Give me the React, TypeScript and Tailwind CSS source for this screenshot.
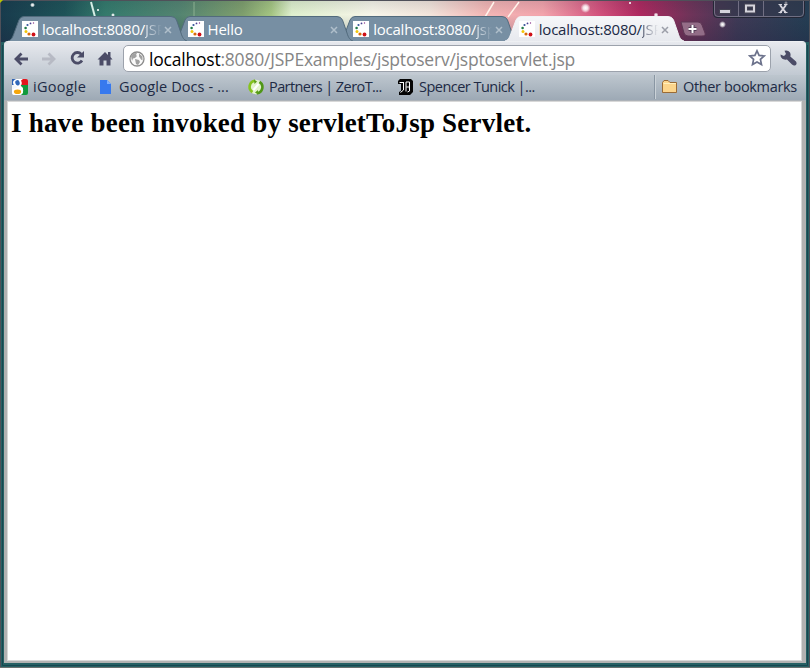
import type { ReactNode } from "react";

const ui = "font-['Open_Sans','Noto_Sans',sans-serif]";

function Backdrop() {
  return (
    <svg className="absolute inset-0" width="810" height="668">
      <defs>
        <linearGradient id="sky" x1="0" x2="810" y1="0" y2="0" gradientUnits="userSpaceOnUse">
          <stop offset="0" stopColor="#183b4d" />
          <stop offset=".08" stopColor="#1e5358" />
          <stop offset=".13" stopColor="#347a6c" />
          <stop offset=".22" stopColor="#538471" />
          <stop offset=".3" stopColor="#7f9f6d" />
          <stop offset=".335" stopColor="#a5c582" />
          <stop offset=".36" stopColor="#dff0ce" />
          <stop offset=".46" stopColor="#f7f5e9" />
          <stop offset=".53" stopColor="#f3e5dc" />
          <stop offset=".6" stopColor="#f3b6b5" />
          <stop offset=".67" stopColor="#f3a4ac" />
          <stop offset=".74" stopColor="#d3517d" />
          <stop offset=".79" stopColor="#ae285f" />
          <stop offset=".85" stopColor="#713359" />
          <stop offset=".91" stopColor="#403a57" />
          <stop offset="1" stopColor="#243e54" />
        </linearGradient>
        <linearGradient id="dusk" x1="0" x2="0" y1="0" y2="42" gradientUnits="userSpaceOnUse">
          <stop offset="0" stopColor="#182838" stopOpacity=".12" />
          <stop offset=".35" stopColor="#182838" stopOpacity="0" />
          <stop offset="1" stopColor="#20203f" stopOpacity=".3" />
        </linearGradient>
        <radialGradient id="star">
          <stop offset="0" stopColor="#fff" />
          <stop offset=".45" stopColor="#fff" stopOpacity=".8" />
          <stop offset="1" stopColor="#fff" stopOpacity="0" />
        </radialGradient>
      </defs>
      <rect width="810" height="668" fill="#256063" />
      <rect width="810" height="42" fill="url(#sky)" />
      <rect width="810" height="42" fill="url(#dusk)" />
      <path d="M91 2l4 15" stroke="#d6eee5" strokeWidth="2" />
      <path d="M194 2v15" stroke="#8baf91" />
      <path d="M494 2l-9 15M519 2l-11 15" stroke="#fff3eb" strokeWidth="1.5" />
      <circle cx="585.500" cy="8" r="5" fill="url(#star)" />
      <circle cx="722.500" cy="24.500" r="3.500" fill="url(#star)" />
      <circle cx="656" cy="15" r="2.500" fill="url(#star)" />
      <circle cx="32.500" cy="5" r="2.500" fill="url(#star)" />
      <circle cx="98" cy="10" r="1.500" fill="url(#star)" />
      <circle cx="113" cy="15" r="2" fill="url(#star)" />
      <circle cx="630" cy="3" r="1.500" fill="url(#star)" />
      <circle cx="786" cy="3" r="2" fill="url(#star)" />
      <path d="M.5 668V.5H809.500V668" fill="none" stroke="#4f5059" />
      <path d="M2.500 45V665.500H807.500V45" fill="none" stroke="#174650" />
      <path d="M0 667.500H810" stroke="#6b706f" />
      <path d="M0 0h3L0 3z" fill="#b8c400" />
    </svg>
  );
}

function Spinner() {
  return (
    <svg width="16" height="16" className="shrink-0">
      <rect width="16" height="16" fill="#fff" />
      <circle cx="11.500" cy="2" r=".7" fill="#8b378c" />
      <circle cx="8.500" cy="2.400" r=".9" fill="#493e91" />
      <circle cx="5.500" cy="4" r="1.100" fill="#36539a" />
      <circle cx="3.600" cy="7" r="1.300" fill="#237a48" />
      <circle cx="4" cy="10.400" r="1.500" fill="#f3c70a" />
      <circle cx="7" cy="13" r="1.600" fill="#d8690a" />
      <circle cx="11.500" cy="13.500" r="1.900" fill="#cf1018" />
    </svg>
  );
}

function Tab({ title, path, active, layer }: { title: string; path?: string; active?: boolean; layer: string }) {
  return (
    <div className={`relative flex h-[25px] w-[179px] shrink-0 -mr-[13.4px] items-center pl-[14px] ${layer}`}>
      <svg className="absolute inset-0" width="179" height="25">
        <defs>
          <linearGradient id="front" x1="0" x2="0" y1="0" y2="1">
            <stop offset="0" stopColor="#f6f7f9" />
            <stop offset="1" stopColor="#e7e9ee" />
          </linearGradient>
        </defs>
        <path
          d="M0 25C4 24 5 20 6.500 16L11 4Q12.500.5 16 .5H163Q167 .5 168.500 4L173 17C174.500 22 176 24 179 25Z"
          fill={active ? "url(#front)" : "#778fa3"}
        />
        <path
          d="M0 25C4 24 5 20 6.500 16L11 4Q12.500.5 16 .5H163Q167 .5 168.500 4L173 17C174.500 22 176 24 179 25"
          fill="none"
          stroke={active ? "#f2f3f6" : "#526b7d"}
        />
      </svg>
      <div className="relative flex items-center">
        <Spinner />
        <span
          className={`${ui} ml-[4px] h-[20px] w-[118px] whitespace-nowrap text-[15px] leading-[20px] tracking-[-0.24px] ${
            active ? "text-[#202945]" : "text-white"
          }`}
        >
          {title}
          {path && (
            <span
              className={`bg-clip-text text-transparent bg-linear-to-r to-80% ${
                active ? "from-[#555b70] to-transparent" : "from-[#e9eef3] to-transparent"
              }`}
            >
              {path}
            </span>
          )}
        </span>
        <svg width="8" height="8" className="ml-[4px] mt-[2px]">
          <path d="M1 1l6 6M7 1L1 7" stroke={active ? "#9b9ea8" : "#b0bfcb"} strokeWidth="1.500" />
        </svg>
      </div>
    </div>
  );
}

function WindowButtons() {
  return (
    <svg className="absolute right-[4px] top-0" width="94" height="19">
      <path d="M1.500 1V14Q1.500 17.500 5 17.500H88Q92.500 17.500 92.500 14V1" fill="#333648" fillOpacity=".55" stroke="#242736" />
      <path d="M2.500 1V13Q2.500 16.500 6 16.500H88Q91.500 16.500 91.500 13V1M26.500 1V16M51.500 1V16" fill="none" stroke="#858195" strokeOpacity=".75" />
      <rect x="7.500" y="9.500" width="11" height="4" fill="#d5d4dc" stroke="#444353" />
      <path d="M34 5.500h8v6h-8z" fill="none" stroke="#454454" strokeWidth="4" />
      <path d="M34 5.500h8v6h-8z" fill="none" stroke="#d5d4dc" strokeWidth="2" />
      <path d="M68 5l6 8M74 5l-6 8" stroke="#d5d4dc" strokeWidth="2" />
      <path d="M66.500 4.500h3.500M72 4.500h3.500M66.500 12.500h3.500M72 12.500h3.500" stroke="#d5d4dc" />
    </svg>
  );
}

function BackArrow({ flip, color }: { flip?: boolean; color: string }) {
  return (
    <svg width="16" height="16" className={flip ? "-scale-x-100" : ""}>
      <path d="M8.500 2.500L3 8L8.500 13.500M3 8H15" fill="none" stroke={color} strokeWidth="2.800" />
    </svg>
  );
}

function Globe() {
  return (
    <svg width="16" height="16" className="shrink-0">
      <circle cx="8" cy="8" r="7" fill="#fafafa" stroke="#8c8c8c" strokeWidth="1.300" />
      <path d="M2 5Q4 1.500 8 2L7 4L8 5L6 7L4 7.500L3 10ZM10 2.500l3.500 3v4l-1.500-1-2-3zM6 8l4 1 1 2-2 3-2-1Z" fill="#a1a1a1" />
    </svg>
  );
}

function Bookmark({ icon, text, className, tracking }: { icon: ReactNode; text: string; className: string; tracking: string }) {
  return (
    <div className={`flex shrink-0 items-center ${className}`}>
      <div className="flex h-4 w-4 shrink-0 items-center">{icon}</div>
      <span className={`${ui} whitespace-nowrap text-[14.500px] leading-5 text-[#202a44] ${tracking}`}>{text}</span>
    </div>
  );
}

function GoogleIcon() {
  return (
    <svg width="16" height="16">
      <path d="M0 0H8V7H0z" fill="#2e62b4" />
      <path d="M8 0H14Q16 0 16 2V6H8z" fill="#e3151c" />
      <path d="M9 6h7v8q0 2-2 2H9z" fill="#119a3d" />
      <path d="M0 6H8L11 9V14L9 16H2Q0 16 0 14Z" fill="#f4f7fa" />
      <path d="M4.500 0H11L9 1.500Q11 5 8 7Q12 9 11 13Q10 16 5 16H2Q0 15 0 12Q1 9 5 9Q4 8 5 7Q1 7 1 3.500Q1 1 4.500 0Z" fill="#fff" />
      <ellipse cx="5.500" cy="3.800" rx="2.200" ry="2.700" fill="#3168b8" transform="rotate(-15 5.500 3.800)" />
      <ellipse cx="5.500" cy="12.800" rx="3.600" ry="2.300" fill="#f5a60c" />
    </svg>
  );
}

function Toolbar() {
  const ink = "#4b4c67";
  return (
    <div className="flex h-[33px] items-center bg-linear-to-b from-[#e7e9ee] to-[#c1c9d2] pl-[9px]">
      <BackArrow color={ink} />
      <div className="ml-[12px] flex"><BackArrow flip color="#b7bac4" /></div>
      <svg width="16" height="16" className="ml-[12px] mb-px">
        <path d="M12.300 4.200A5.300 5.300 0 1 0 13 10.500" fill="none" stroke={ink} strokeWidth="2.800" />
        <path d="M15 1V7.500H8z" fill={ink} />
      </svg>
      <svg width="16" height="16" className="ml-[12px] mb-[2px]">
        <path d="M.5 9.500L8 2L11 5V2h2.500v5l2 2.500H13.500V15.500H9.500V10.500H6.500V15.500H2.500V9.500Z" fill={ink} />
      </svg>
      <div className="ml-[10px] flex h-[27px] w-[648px] items-center rounded-[5px] border border-[#9ca2ac] bg-white pl-[5px] pr-[4px]">
        <Globe />
        <span className={`${ui} ml-[4px] flex-1 whitespace-nowrap text-[17.500px] leading-[24px] tracking-[-0.21px] text-[#858585]`}>
          <span className="text-black">localhost</span>:8080/JSPExamples/jsptoserv/jsptoservlet.jsp
        </span>
        <svg width="18" height="18" className="mb-px">
          <path d="M9 1.800L11.100 6.400L16.200 7L12.400 10.400L13.500 15.600L9 13L4.500 15.600L5.600 10.400L1.800 7L6.900 6.400Z" fill="#fff" stroke="#6b718b" strokeWidth="1.700" />
        </svg>
      </div>
      <svg width="17" height="17" className="ml-[9px]">
        <path d="M.5 4.500L4 6L6 4L4.500 .8Q8-.2 10 2.500Q11 4.500 10.300 6.500L16 11.500Q17.300 13.500 15.800 15Q14 16.300 12 14.500L7 9.500Q2.500 10.300.8 7Z" fill={ink} />
      </svg>
    </div>
  );
}

function Bookmarks() {
  return (
    <div className="flex h-[26px] items-center border-b border-[#adb2b8] bg-linear-to-b from-[#bdc6ce] to-[#9da9b5] pb-px pl-[8px]">
      <Bookmark className="w-[86px] gap-[5px]" tracking="tracking-[0.25px]" text="iGoogle" icon={<GoogleIcon />} />
      <Bookmark
        className="w-[150px] gap-[5px]"
        tracking="tracking-[0.1px]"
        text="Google Docs - ..."
        icon={<svg width="14" height="16"><path d="M2 1H9L13 5V15H2Z" fill="#3779ee" /><path d="M9 1V5H13Z" fill="#7fb0ff" /></svg>}
      />
      <Bookmark
        className="w-[150px] gap-[5px]"
        tracking="tracking-[-0.58px]"
        text="Partners | ZeroT..."
        icon={
          <svg width="16" height="16">
            <circle cx="8" cy="8" r="7.300" fill="#e3f2cb" />
            <path d="M7 1.800A6.200 6.200 0 0 0 4.500 13.200" fill="none" stroke="#86c31f" strokeWidth="2.600" />
            <path d="M9 14.200A6.200 6.200 0 0 0 11.500 2.800" fill="none" stroke="#4f9617" strokeWidth="2.600" />
            <path d="M6 .5L9 2.500L6.500 5ZM10 11L7 13.500L10 15.500Z" fill="#5a9e17" />
            <path d="M5.500 11L10.500 5" stroke="#fff" strokeWidth="2" />
          </svg>
        }
      />
      <Bookmark
        className="w-[200px] gap-[5px]"
        tracking="tracking-[-0.520px]"
        text="Spencer Tunick |..."
        icon={
          <svg width="16" height="16">
            <path d="M2 0H13L15 2V13L12 16H1V13L3 12V5H0V2Z" fill="#050505" />
            <path d="M1.500 3.500H6M5.500 3.500V11L2.500 13.500M8 3V12.500M8 3H11.500V12L9.500 13" fill="none" stroke="#fff" />
            <path d="M8 7l3 2M11 7L8 9" stroke="#c4c4c4" strokeWidth=".8" />
          </svg>
        }
      />
      <div className="ml-auto mr-[6px] h-[24px] w-[2px] border-l border-[#8996a3] bg-[#cbd2d8]" />
      <Bookmark
        className="w-[144px] gap-[5px]"
        tracking="tracking-[-0.350px]"
        text="Other bookmarks"
        icon={
          <svg width="16" height="16">
            <path d="M.5 3.500L2 1.500H6L8 3.500H14.500V13.500H.5Z" fill="#fcd58c" stroke="#9a6b36" />
            <path d="M1.500 4.500H14" stroke="#fff0bd" />
          </svg>
        }
      />
    </div>
  );
}

export default function App() {
  return (
    <div className="relative h-[668px] w-[810px] overflow-hidden">
      <Backdrop />
      <WindowButtons />
      <div className="relative flex h-full flex-col px-[4px] pb-[5px] pt-[16px]">
        <div className="relative z-10 flex h-[25px] pl-[4px]">
          <Tab title="localhost:8080/" path="JSP" layer="z-30" />
          <Tab title="Hello" layer="z-20" />
          <Tab title="localhost:8080/" path="jsp" layer="z-10" />
          <Tab title="localhost:8080/" path="JSP" active layer="z-40" />
          <svg width="26" height="16" className="relative ml-[10px] mt-[5px]">
            <path d="M1 1H18Q21 1 22 4L25 12Q26 15 22 15H8Q5 15 4 12Z" fill="#9c7891" fillOpacity=".85" stroke="#5d3654" />
            <path d="M8.500 8H16.500M12.500 4V12" stroke="#503b54" strokeWidth="4" />
            <path d="M8.500 8H16.500M12.500 4V12" stroke="#fff" strokeWidth="2" />
          </svg>
        </div>
        <div className="flex min-h-0 flex-1 flex-col overflow-hidden rounded-t-[4px] border-t border-[#eef0f3] bg-[#b2b2b2]">
          <Toolbar />
          <Bookmarks />
          <div className="ml-[3px] mr-[4px] mb-[2px] flex-1 border border-[#d8d8d8] bg-white pl-[3px] pt-[6px]">
            <h1 className="whitespace-nowrap font-['Liberation_Serif',serif] text-[27px] font-bold leading-[30px] tracking-[0.21px] text-black">
              I have been invoked by servletToJsp Servlet.
            </h1>
          </div>
        </div>
      </div>
    </div>
  );
}
